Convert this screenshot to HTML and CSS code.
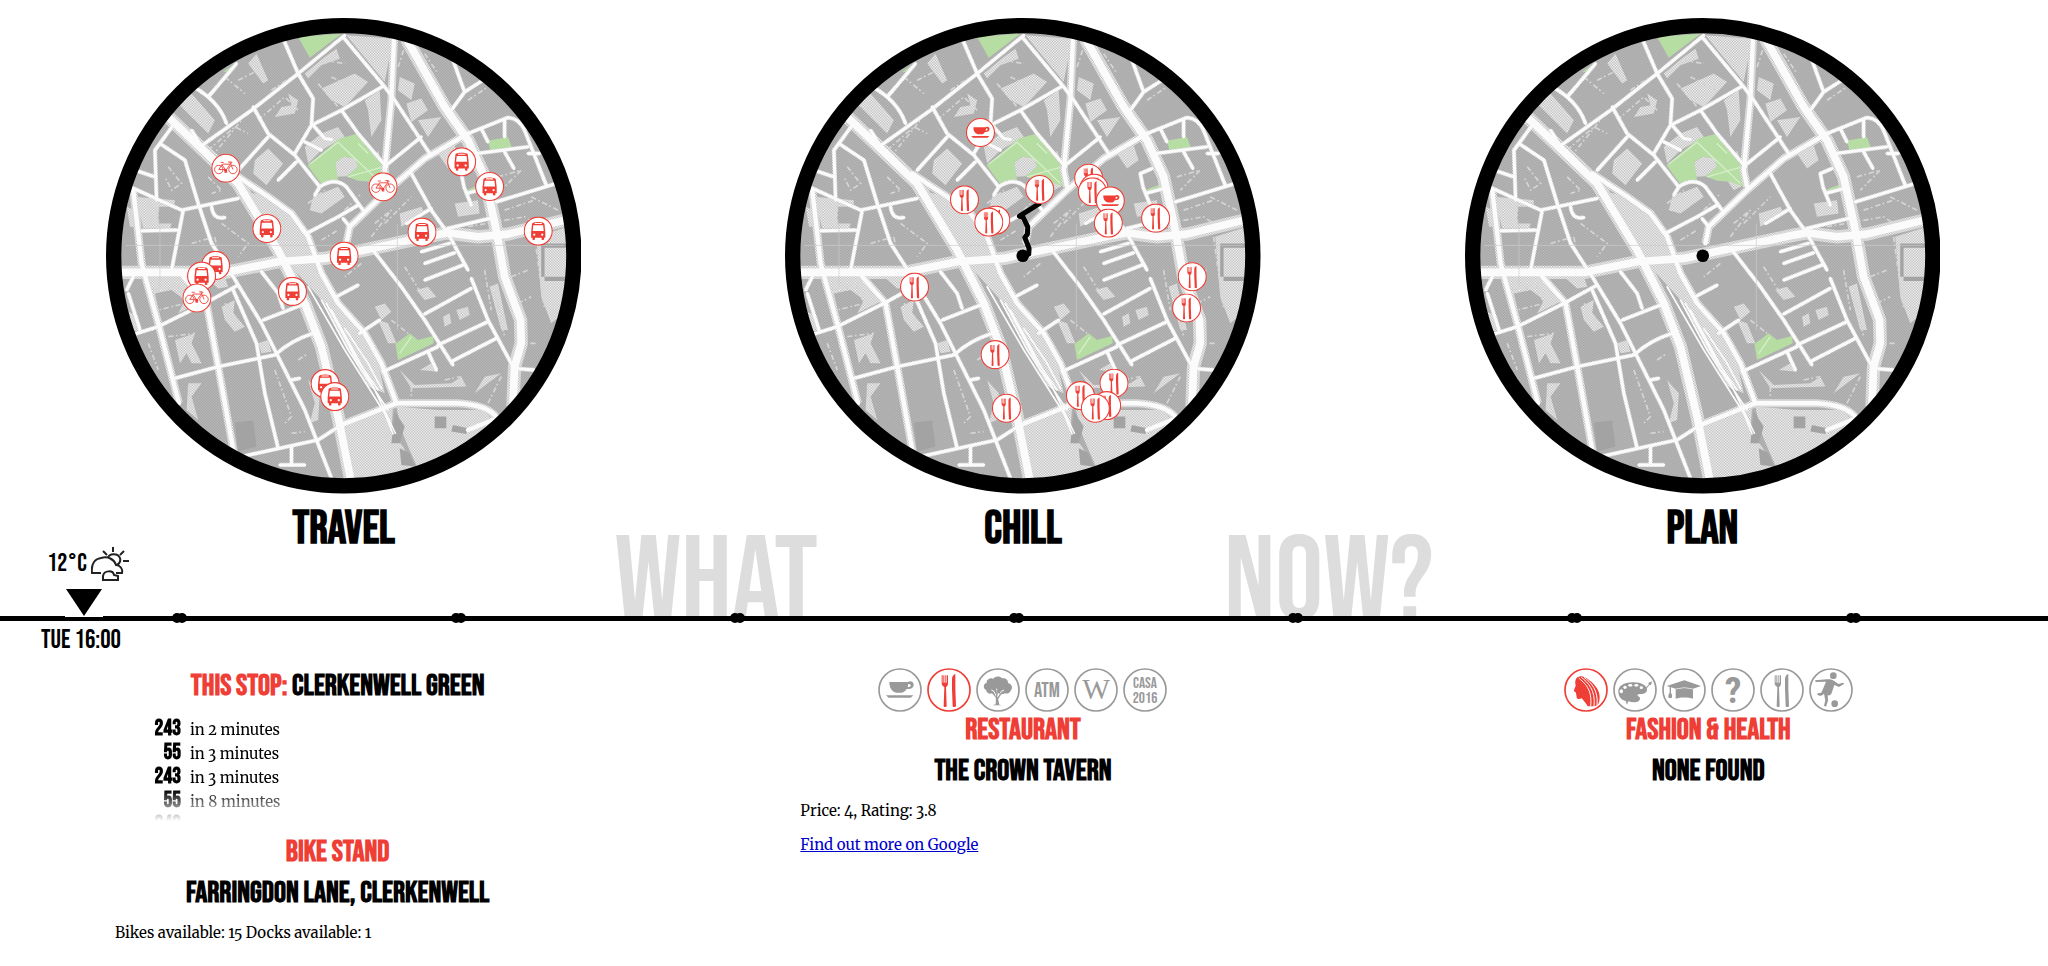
FILE: index.html
```
<!DOCTYPE html>
<html lang="en">
<head>
<meta charset="utf-8">
<title>What Now?</title>
<link rel="stylesheet" href="styles.css">
</head>
<body>
<svg class="sprite" aria-hidden="true">
  <defs>
    <pattern id="dark" width="8" height="8" patternUnits="userSpaceOnUse"><rect width="8" height="8" fill="#bdbdbd"/><path d="M0 0h4v4H0zM4 4h4v4H4z" fill="#a2a2a2"/></pattern>
    <pattern id="light" width="8" height="8" patternUnits="userSpaceOnUse"><rect width="8" height="8" fill="#fff"/><path d="M0 0h4v4H0zM4 4h4v4H4z" fill="#b2b2b2"/></pattern>
    <pattern id="green" width="8" height="8" patternUnits="userSpaceOnUse"><rect width="8" height="8" fill="#c4e6b2"/><path d="M0 0h4v4H0zM4 4h4v4H4z" fill="#a9d494"/></pattern>
    <clipPath id="disc"><circle cx="757" cy="737" r="672"/></clipPath>

    <g id="major">
      <path d="M80 787H400L560 755 700 745 1030 675 1070 668 1160 680 1250 672 1430 628"/>
      <path d="M230 320L340 425 440 520 560 720 640 880 690 1010 740 1220 778 1410"/>
      <path d="M945 85L1060 290 1130 390 1180 500 1215 660 1240 800 1288 930 1290 1000 1270 1070 1265 1190"/>
    </g>
    <g id="middle">
      <path d="M908 80L900 270 880 480 890 530"/>
      <path d="M765 700L775 650 890 540 1000 445 1130 370"/>
      <path d="M275 800L345 880 380 1070 428 1335"/>
      <path d="M125 540L150 760 200 940 262 1180"/>
      <path d="M425 490L530 560 600 610 650 680 690 790 740 880 820 970 870 1060 915 1180"/>
      <path d="M750 1245L915 1180H1100Q1190 1185 1218 1225L1130 1260"/>
    </g>
    <g id="minor">
      <path d="M325 410L480 300 620 190 760 75"/>
      <path d="M755 80L880 230 910 270 1015 430"/>
      <path d="M575 85L620 190 665 265 660 345 610 430"/>
      <path d="M660 345L750 300 875 228M750 300L800 370 885 470M665 345L700 385 720 388"/>
      <path d="M485 290L530 370 610 435 685 530Q730 500 765 530L815 600M685 530L670 555"/>
      <path d="M645 670L740 620 800 585M755 625L775 650M885 465L990 380"/>
      <path d="M1130 370L1250 322Q1285 325 1300 360L1365 525M1170 355L1190 395M1240 325V380M1155 430L1310 410M1240 425L1268 475M1310 430L1345 430"/>
      <path d="M1085 150L1120 245 1080 300M1120 245L1175 210"/>
      <path d="M960 490L1020 600 1070 670 1130 780M1140 805L1190 930 1265 1070"/>
      <path d="M845 720L930 830 1000 930 1085 1065"/>
      <path d="M1000 912L1140 835M1040 1005L1190 935M1080 1055L1215 985M875 1085L1040 1010M1265 1075L1330 1080"/>
      <path d="M450 1340L680 1290 750 1245M600 1310V1360M565 1365H640"/>
      <path d="M250 1105L380 1070 550 1035Q600 990 665 970"/>
      <path d="M130 972L200 950 340 880 440 825M105 840L125 800M110 850L145 960"/>
      <path d="M245 345L190 420 195 570M205 400L280 450 320 580 360 700 425 800 510 940 560 1040 640 1200 720 1405"/>
      <path d="M115 530L270 600 440 565M275 600L240 780M150 662L255 660M130 480L190 500"/>
      <path d="M425 840L495 1000 520 1150 560 1315M515 930L630 885M510 785L560 850 575 895"/>
      <path d="M350 260L435 160M305 230Q380 270 405 340M325 400L300 360"/>
      <path d="M1215 575L1395 520M1070 655L1195 625M1145 475L1110 490 1118 530 1140 585M1125 550L1180 535"/>
      <path d="M945 640L1020 595M990 725L1075 700M1000 760L1090 728M1000 810L1115 765M1010 1025L1035 1080"/>
      <path d="M440 480L530 380M560 510L615 455M735 860L800 825M805 970L865 930M360 590Q365 630 400 622M640 395L690 420M600 1110L625 1105"/>
    </g>

    <g id="city">
      <circle cx="757" cy="737" r="680" fill="url(#dark)"/>
      <g fill="url(#light)">
        <path d="M440 540L540 560 645 665 690 800 750 900 850 1010 880 1150 830 1130 690 870 600 770z"/>
        <path d="M755 1250L905 1190 900 1270 935 1310 990 1420H780zM915 1190L1040 1200 1180 1200 1215 1250 1060 1420 990 1400 950 1310 930 1260z"/>
        <path d="M765 75L905 85 880 215zM640 190L700 140 735 115 745 145 690 165 650 205zM1335 680L1430 650V900L1380 940 1350 860z"/>
        <path d="M690 235L790 190 830 215 760 290 720 270zM470 160L495 130 530 210 515 220zM250 270L300 250 370 330 350 370 300 320z"/>
        <path d="M490 450L530 415 575 460 525 525 485 490zM690 370L740 350 760 380 690 420 650 460 640 410z"/>
        <path d="M665 560L740 530 760 560 690 610 655 600zM820 270L865 240 870 330 840 380 830 300zM925 200L970 220 960 270 920 240zM945 280L990 265 1010 300 960 335zM980 330L1050 320 1010 380z"/>
        <path d="M1040 430L1090 405 1105 450 1070 475zM1090 580L1160 570 1165 610 1100 620zM1180 1100L1230 1090 1150 1150zM130 560L250 570 248 590H200V640H240L236 655H155zM105 590L130 600 140 650 115 650z"/>
        <path d="M150 800L260 800 340 870 260 910 280 870 240 840 190 850 205 920zM100 900L140 920 145 960 120 965zM250 990L310 970 300 1000 330 1060 300 1060 285 1030 265 1060zM290 1120L330 1120 300 1160 320 1230 285 1200z"/>
        <path d="M850 890L880 880 900 905 870 930zM860 930L890 940 915 1000 890 1000zM975 840L1010 830 1035 860 1000 870zM1055 920L1075 910 1080 940 1060 950zM1095 900L1130 890 1135 915 1105 930z"/>
        <path d="M390 890L430 870 425 910 460 950 430 965 400 930zM650 1110L685 1150 680 1230 655 1240 670 1180zM1080 1120L1110 1100 1125 1130 960 1135 925 1080 970 1125zM1195 830L1220 820 1250 960 1230 960zM860 420L890 520 850 540 830 510zM590 250L620 270 610 310 550 320 570 290 600 285z"/>
        <path d="M925 610L990 590 1000 610 930 650zM340 800L400 800 410 830 380 835zM500 1000L530 990 540 1025 510 1030zM985 1080L1020 1060 1040 1085z"/>
      </g>
      <g fill="none" stroke="#d6d6d6" stroke-width="5" stroke-dasharray="16 7 5 9">
        <path d="M350 420L430 350 470 370M360 440L450 330M230 470L270 520 240 540 220 500M350 500L390 540 360 550M300 700L370 680 380 740M390 640L470 700 440 740M180 580V650M200 590V640"/>
        <path d="M560 600L620 640M690 690L740 660M760 600L810 550M850 640L900 600 840 680M920 170L940 110M1000 130L1040 190M1130 270L1190 230M1220 500L1290 480 1230 540M1240 600L1330 570M1320 560L1400 600"/>
        <path d="M940 770L990 850M1180 780L1200 900M1260 800L1310 780M1280 880L1320 860M1330 680L1360 900M1210 840L1240 980M550 1080L600 1220 580 1240M620 1050L650 1030M600 1270L640 1265M400 880L440 930M230 980L310 970"/>
        <path d="M170 1000L200 1080M290 1130L310 1220M960 1130V1170M1190 1180L1230 1100M500 330L580 260 620 300M700 150L760 160M720 200L800 240M680 220L740 290M810 760L760 800M900 930L950 970M1060 1110L1110 1100"/>
        <path d="M180 840L260 830 280 880 200 900M400 200L460 250M440 210L500 180M540 240L600 200M650 580L700 540M880 640L960 560M1280 1000L1340 1000M1130 650L1300 620 1330 640"/>
      </g>
      <g fill="#a3a3a3">
        <path d="M430 1238L485 1232 495 1310 440 1325zM910 1205L940 1250 925 1300 900 1300zM925 1315L955 1330 970 1370 930 1365zM1030 1220H1065V1255H1030zM1085 1245L1130 1255 1125 1272 1080 1265zM1350 700H1430V713H1360V800H1350zM1360 800H1430V813H1360z"/>
      </g>
      <g fill="url(#green)">
        <path d="M648 465L745 385 800 370 888 470 878 530 840 515 800 512 765 498 800 470 790 445 755 440 732 458 740 508 690 522z"/>
        <path d="M620 80L750 70 655 142zM1190 392L1250 380 1265 420 1200 430zM1120 542L1170 522 1177 538 1125 556zM912 1002L955 970 980 990 1025 978 1027 1000 920 1050zM395 185L435 155 410 185z"/>
      </g>
      <path d="M732 458L755 440 790 445 800 470 765 498 738 500z" fill="url(#light)"/>
      <path d="M655 462L740 396 800 455M740 396L870 520M770 500L875 470M800 400L830 430M925 1030L960 980" fill="none" stroke="#d4efc8" stroke-width="4"/>
      <g fill="none" stroke="url(#light)" stroke-linejoin="round">
        <use href="#major" stroke-width="40"/><use href="#middle" stroke-width="24"/><use href="#minor" stroke-width="13"/>
      </g>
      <g fill="none" stroke="#fbfbfb" stroke-linejoin="round" stroke-linecap="round">
        <use href="#major" stroke-width="23"/><use href="#middle" stroke-width="13"/><use href="#minor" stroke-width="9"/>
        <path stroke-width="5" d="M650 830L760 1020 880 1210 905 1272M690 870L770 1020 890 1200M705 880L790 1040 860 1140M760 955L830 1060 870 1135M720 900L850 1140M850 1140L912 1270"/>
      </g>
      <path d="M100 706H1420M918 640V960M205 640V830" fill="none" stroke="#ccc" stroke-width="2"/>
    </g>
  </defs>

  <symbol id="ring" viewBox="0 0 132 132"><circle cx="66" cy="66" r="63" fill="#fff" stroke="currentColor" stroke-width="5"/></symbol>

  <symbol id="fork" viewBox="0 0 132 132">
    <use href="#ring" width="132" height="132"/>
    <g fill="currentColor"><path d="M44 22h3v22h2V22h3v22h3V22h3v22h2V22h3v24c0 7-3 9-6 12l2 56c0 4-9 4-9 0l2-56c-3-3-8-5-8-12z"/><path d="M75 62V34c0-8 3-14 10-16v44l2 52c0 4-10 4-10 0z"/></g>
  </symbol>
  <symbol id="cup" viewBox="0 0 132 132">
    <use href="#ring" width="132" height="132"/>
    <path d="M34 42h56c4-4 17-2 17 8 0 9-8 14-21 13-4 7-9 10-15 11H54c-14-4-20-17-20-32zm57 6l-2 9c12 1 12-10 2-9zM24 82h82l-8 7H32z" fill="currentColor" fill-rule="evenodd"/>
  </symbol>
  <symbol id="tree" viewBox="0 0 132 132">
    <use href="#ring" width="132" height="132"/>
    <path d="M30 66c-10-6-8-20 2-22-1-12 14-16 20-12 6-8 20-8 26-1 12-3 19 6 18 14 12 3 16 16 8 23-3 8-12 10-18 8-8 6-14 2-20-1L66 92l4 18 8 2H50l9-3 1-19-12-14c-8 4-16-2-18-10z" fill="currentColor"/>
    <path d="M62 88L54 70l-8-4M65 88L62 62M67 88L76 70l8-4" fill="none" stroke="#fff" stroke-width="3"/>
    <path d="M61 92L64 66M65 92L75 76" fill="none" stroke="currentColor" stroke-width="4"/>
  </symbol>
  <symbol id="bus" viewBox="0 0 132 132">
    <use href="#ring" width="132" height="132"/>
    <path d="M38 34c0-12 56-12 56 0l4 36v26h-6v8c0 3-11 3-11 0v-8H51v8c0 3-11 3-11 0v-8h-6V70zM50 29v5h32v-5zm-6 11l-3 26h50l-3-26zM48 77a5 5 0 1 0 .1 0zM84 77a5 5 0 1 0 .1 0z" fill="currentColor" fill-rule="evenodd"/>
  </symbol>
  <symbol id="bike" viewBox="0 0 132 132">
    <use href="#ring" width="132" height="132"/>
    <g fill="none" stroke="currentColor" stroke-width="4"><circle cx="34" cy="72" r="19"/><circle cx="98" cy="72" r="19"/><path d="M34 72L50 48H86L66 76 48 50M34 72H64M98 72L84 38H76M84 38c12-3 10 8 5 6M42 40H56M66 76v8M60 85h12"/></g>
    <circle cx="65" cy="77" r="7" fill="currentColor"/>
  </symbol>
  <symbol id="face" viewBox="0 0 132 132">
    <use href="#ring" width="132" height="132"/>
    <path d="M40 28C56 20 66 30 78 38 94 50 108 70 107 88c-1 8 0 16-6 22-6 5-16 5-30 5-4-8-10-14-18-24-6 2-12 3-15-2l-1-9-2-7-6-4 6-16c-3-10-1-20 5-25z" fill="currentColor"/>
    <path d="M44 30C60 44 86 62 80 115M52 28C70 42 96 66 90 115M60 28C80 42 104 66 99 112" fill="none" stroke="#fff" stroke-width="3"/>
  </symbol>
  <symbol id="palette" viewBox="0 0 132 132">
    <use href="#ring" width="132" height="132"/>
    <path d="M16 72C14 54 34 42 62 43c24 0 40 10 40 22 0 10-10 13-22 13-8 1-8 6-2 8 6 3 4 14-8 16-8 2-16 0-24-2l-4 10-4-11C24 96 17 86 16 72z" fill="currentColor"/>
    <path d="M88 72L108 48l-3-3 12-5-3 12-4-2-20 24z" fill="currentColor"/>
    <g fill="#fff"><ellipse cx="25" cy="70" rx="5" ry="6"/><ellipse cx="36" cy="58" rx="5" ry="5"/><ellipse cx="52" cy="52" rx="6" ry="4"/><ellipse cx="70" cy="52" rx="6" ry="4"/><ellipse cx="85" cy="59" rx="5" ry="4"/></g>
  </symbol>
  <symbol id="gradcap" viewBox="0 0 132 132">
    <use href="#ring" width="132" height="132"/>
    <path d="M14 54L67 37l50 17-24 8v30c-14-5-38-5-52 0V62l-14-4v16c4 6 4 12 2 16h-9c-2-5-1-11 3-16V57z" fill="currentColor"/>
    <path d="M41 63l26-4 26 4" fill="none" stroke="#fff" stroke-width="2"/>
  </symbol>
  <symbol id="football" viewBox="0 0 132 132">
    <use href="#ring" width="132" height="132"/>
    <g fill="currentColor"><circle cx="73" cy="23" r="10"/><circle cx="77" cy="107" r="10"/><path d="M18 37l36-3c8-1 16 1 22 5l12 9 14-4 4 3-16 10-14-6-8 24c-2 6-6 8-12 7l1 16-6 18-6-3 4-16-4-20c-4 4-8 6-12 6l-8-2 1-5 11-2 14-33-31 1z"/></g>
  </symbol>
</svg>

<main>
  <section class="scopes">
    <article class="scope">
      <svg class="map" viewBox="43 23 1428 1428" role="img" aria-label="Travel map">
        <g clip-path="url(#disc)"><use href="#city"/></g>
        <circle class="rim" cx="757" cy="737" r="691"/>
        <g class="pins">
          <use href="#bike" x="359" y="430" width="88" height="88"/><use href="#bike" x="831" y="486" width="88" height="88"/>
          <use href="#bus" x="1067" y="411" width="88" height="88"/><use href="#bus" x="1151" y="485" width="88" height="88"/>
          <use href="#bus" x="482" y="611" width="88" height="88"/><use href="#bus" x="948" y="622" width="88" height="88"/>
          <use href="#bus" x="1297" y="619" width="88" height="88"/><use href="#bus" x="714" y="694" width="88" height="88"/>
          <use href="#bus" x="328" y="722" width="88" height="88"/><use href="#bus" x="286" y="754" width="88" height="88"/>
          <use href="#bike" x="272" y="820" width="88" height="88"/><use href="#bus" x="559" y="800" width="88" height="88"/>
          <use href="#bus" x="657" y="1077" width="88" height="88"/><use href="#bus" x="686" y="1116" width="88" height="88"/>
        </g>
      </svg>
      <h2>Travel</h2>
    </article>
    <article class="scope">
      <svg class="map" viewBox="43 23 1428 1428" role="img" aria-label="Chill map">
        <g clip-path="url(#disc)"><use href="#city"/></g>
        <circle class="rim" cx="757" cy="737" r="691"/>
        <path class="route" d="M757 737L775 732 776 715 763 682 771 672 772 650 758 622 747 618 810 578"/>
        <circle cx="757" cy="737" r="19"/>
        <g class="pins">
          <use href="#cup" x="586" y="323" width="88" height="88"/><use href="#fork" x="764" y="494" width="88" height="88"/>
          <use href="#fork" x="538" y="525" width="88" height="88"/><use href="#fork" x="632" y="586" width="88" height="88"/>
          <use href="#fork" x="611" y="592" width="88" height="88"/><use href="#fork" x="911" y="460" width="88" height="88"/>
          <use href="#fork" x="927" y="490" width="88" height="88"/><use href="#fork" x="922" y="501" width="88" height="88"/>
          <use href="#cup" x="976" y="528" width="88" height="88"/><use href="#fork" x="970" y="595" width="88" height="88"/>
          <use href="#fork" x="1112" y="580" width="88" height="88"/><use href="#fork" x="388" y="787" width="88" height="88"/>
          <use href="#fork" x="1222" y="756" width="88" height="88"/><use href="#fork" x="1205" y="850" width="88" height="88"/>
          <use href="#fork" x="630" y="990" width="88" height="88"/>
          <use href="#fork" x="664" y="1151" width="88" height="88"/><use href="#fork" x="987" y="1076" width="88" height="88"/>
          <use href="#fork" x="886" y="1113" width="88" height="88"/><use href="#fork" x="965" y="1143" width="88" height="88"/>
          <use href="#fork" x="931" y="1151" width="88" height="88"/>
        </g>
      </svg>
      <h2>Chill</h2>
    </article>
    <article class="scope">
      <svg class="map" viewBox="43 23 1428 1428" role="img" aria-label="Plan map">
        <g clip-path="url(#disc)"><use href="#city"/></g>
        <circle class="rim" cx="757" cy="737" r="691"/>
        <circle cx="757" cy="737" r="19"/>
      </svg>
      <h2>Plan</h2>
    </article>
  </section>

  <section class="timeline">
    <div class="above">
      <div class="watermark"><span>What</span><span>Now?</span></div>
      <div class="now">
        <div class="weather">
          <span>12°C</span>
          <svg class="sky" viewBox="0 0 38 36" role="img" aria-label="Partly cloudy">
            <g fill="none" stroke="#222" stroke-width="2"><path d="M10 27H1c-1-8 2-14 9-15 7-2 13 1 15 7 4 0 7 4 6 8h-6M17 12c1-5 10-5 12 0 1 4-1 6-3 7M12 34h15v-4l-4-1c-1-5-10-5-11 1zM22 1v5M12 5l4 4M33 5l-4 4M32 15h6"/></g>
          </svg>
        </div>
        <svg class="arrow" viewBox="0 0 38 29" aria-hidden="true"><path d="M0 0h38v29H0z" fill="#fff"/><path d="M1 1h36L19 28z"/></svg>
      </div>
    </div>
    <div class="rail"><i></i><i></i><i></i><i></i><i></i><i></i><i></i></div>
    <time class="clock">Tue 16:00</time>
  </section>

  <section class="details">
    <article class="detail">
      <h3 class="stop"><span class="tag">This stop:</span> Clerkenwell Green</h3>
      <ul class="buses">
        <li><b>243</b><span>in 2 minutes</span></li>
        <li><b>55</b><span>in 3 minutes</span></li>
        <li><b>243</b><span>in 3 minutes</span></li>
        <li><b>55</b><span>in 8 minutes</span></li>
        <li><b>243</b></li>
      </ul>
      <h3 class="tag">Bike stand</h3>
      <h3>Farringdon Lane, Clerkenwell</h3>
      <p>Bikes available: 15 Docks available: 1</p>
    </article>
    <article class="detail">
      <nav class="picker" aria-label="Chill categories">
        <button type="button" aria-label="Coffee"><svg><use href="#cup"/></svg></button>
        <button type="button" class="on" aria-label="Restaurant"><svg><use href="#fork"/></svg></button>
        <button type="button" aria-label="Park"><svg><use href="#tree"/></svg></button>
        <button type="button" aria-label="Cash machine"><svg viewBox="0 0 132 132"><use href="#ring"/><text class="glyph glyph-atm" x="66" y="86">ATM</text></svg></button>
        <button type="button" aria-label="Wikipedia"><svg viewBox="0 0 132 132"><use href="#ring"/><text class="glyph glyph-wiki" x="66" y="92">W</text></svg></button>
        <button type="button" aria-label="CASA 2016"><svg viewBox="0 0 132 132"><use href="#ring"/><text class="glyph glyph-casa" x="66" y="61">CASA</text><text class="glyph glyph-casa" x="66" y="104">2016</text></svg></button>
      </nav>
      <h3 class="tag">Restaurant</h3>
      <h3>The Crown Tavern</h3>
      <p>Price: 4, Rating: 3.8</p>
      <p><a href="#">Find out more on Google</a></p>
    </article>
    <article class="detail">
      <nav class="picker" aria-label="Plan categories">
        <button type="button" class="on" aria-label="Fashion and health"><svg><use href="#face"/></svg></button>
        <button type="button" aria-label="Arts"><svg><use href="#palette"/></svg></button>
        <button type="button" aria-label="Education"><svg><use href="#gradcap"/></svg></button>
        <button type="button" aria-label="Other"><svg viewBox="0 0 132 132"><use href="#ring"/><text class="glyph glyph-mark" x="66" y="105">?</text></svg></button>
        <button type="button" aria-label="Food"><svg><use href="#fork"/></svg></button>
        <button type="button" aria-label="Sport"><svg><use href="#football"/></svg></button>
      </nav>
      <h3 class="tag">Fashion &amp; Health</h3>
      <h3>None found</h3>
    </article>
  </section>
</main>
</body>
</html>
```
FILE: styles.css
```
* { box-sizing: border-box; }

body {
  margin: 0;
  background: #fff;
  color: #000;
  font-family: "Merriweather", "Liberation Serif", serif;
  font-size: 15px;
  line-height: 24px;
  font-variant-numeric: oldstyle-nums;
}

h2, h3, p, ul { margin: 0; padding: 0; }

.sprite { position: absolute; width: 0; height: 0; }

h2, h3, .watermark, .weather, .clock, .buses b, .glyph {
  font-family: "Bebas Neue", "Open Sans Condensed", sans-serif;
  text-transform: uppercase;
}

/* Circular maps */
.scopes {
  display: grid;
  grid-template-columns: repeat(3, 1fr);
  padding: 18px 6px 0 4px;
}
.scope { display: flex; flex-direction: column; align-items: center; }
.map { display: block; width: 70%; aspect-ratio: 1; }
.rim { fill: none; stroke: #000; stroke-width: 46; }
.route { fill: none; stroke: #000; stroke-width: 15; stroke-linejoin: round; }
.pins { color: #ef3e36; }
h2 { margin-top: 19px; font-size: 46px; line-height: 34px; }

/* Timeline */
.above { position: relative; height: 69px; }
.watermark {
  position: absolute;
  left: 30%;
  right: 30%;
  bottom: -39px;
  display: flex;
  justify-content: space-between;
  color: #ddd;
  font-size: 120px;
  line-height: 144px;
}
.now { position: relative; z-index: 2; width: 168px; display: flex; flex-direction: column; align-items: center; gap: 6px; }
.weather { display: flex; align-items: center; gap: 4px; padding-left: 8px; height: 35px; font-size: 25px; }
.sky { width: 38px; height: 36px; }
.arrow { width: 38px; height: 29px; }
.rail {
  position: relative;
  display: flex;
  align-items: center;
  justify-content: space-between;
  height: 5px;
  padding: 0 187px 0 172px;
  background: #000;
}
.rail i { display: flex; justify-content: space-between; width: 15px; }
.rail i::before, .rail i::after { content: ""; width: 10px; height: 10px; border-radius: 50%; background: #000; }
.rail i::after { margin-left: -5px; }
.clock { display: block; width: 168px; padding-right: 6px; margin-top: 7px; font-size: 26px; line-height: 26px; text-align: center; }

/* Details under each map */
.details {
  display: grid;
  grid-template-columns: repeat(3, 1fr);
  column-gap: 240px;
  padding: 14px 117px 24px 115px;
}
h3 { font-size: 30px; line-height: 36px; text-align: center; }
h3 + h3 { margin-top: 5px; }
.tag { color: #ef3e36; }
.buses {
  height: 104px;
  margin: 13px 0;
  overflow: hidden;
  list-style: none;
  -webkit-mask-image: linear-gradient(#000 70%, transparent);
  mask-image: linear-gradient(#000 70%, transparent);
}
.buses li { display: grid; grid-template-columns: 66px 1fr; column-gap: 9px; height: 24px; align-items: baseline; }
.buses b { font-size: 22px; line-height: 24px; text-align: right; }
.detail p { margin-top: 10px; }
a { color: #00c; }

.picker { display: flex; justify-content: center; gap: 5px; }
.picker button { width: 44px; height: 44px; padding: 0; border: 0; background: none; color: #999; cursor: pointer; }
.picker .on { color: #ef3e36; }
.picker svg { display: block; width: 44px; height: 44px; }

.glyph { fill: currentColor; text-anchor: middle; }
.glyph-atm { font-size: 62px; }
.glyph-casa { font-size: 46px; }
.glyph-mark { font-family: "Roboto Condensed", sans-serif; font-size: 112px; font-weight: 700; }
.glyph-wiki { font-family: "Liberation Serif", serif; font-size: 88px; }
```
